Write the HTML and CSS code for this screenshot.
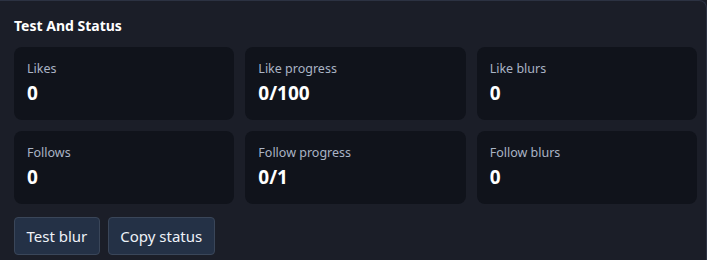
FILE: index.html
```html
<!DOCTYPE html>
<html>
<head>
<meta charset="utf-8">
<link rel="stylesheet" href="styles.css">
</head>
<body>
<section class="panel">
  <h2 class="title">Test And Status</h2>
  <div class="grid">
    <div class="card"><div class="label">Likes</div><div class="value">0</div></div>
    <div class="card"><div class="label">Like progress</div><div class="value">0/100</div></div>
    <div class="card"><div class="label">Like blurs</div><div class="value">0</div></div>
    <div class="card"><div class="label">Follows</div><div class="value">0</div></div>
    <div class="card"><div class="label">Follow progress</div><div class="value">0/1</div></div>
    <div class="card"><div class="label">Follow blurs</div><div class="value">0</div></div>
  </div>
  <div class="actions">
    <button class="btn">Test blur</button>
    <button class="btn">Copy status</button>
  </div>
</section>
</body>
</html>
```
FILE: styles.css
```css
html, body {
  margin: 0;
  padding: 0;
  background: #1b1e28;
}
body {
  font-family: "Noto Sans", "Open Sans", sans-serif;
  width: 707px;
  height: 260px;
  overflow: hidden;
}
.panel {
  box-sizing: border-box;
  width: 707px;
  height: 270px;
  background: #1b1e28;
  border-top: 1px solid #2c3242;
  border-right: 1px solid #2c3242;
  border-top-right-radius: 8px;
  padding: 15px 9px 0 14px;
}
.title {
  margin: 0;
  font-size: 14px;
  font-weight: 700;
  color: #ffffff;
  line-height: 20px;
}
.grid {
  margin-top: 11px;
  display: grid;
  grid-template-columns: repeat(3, 1fr);
  gap: 11px;
}
.card {
  background: #10131b;
  border-radius: 8px;
  height: 73px;
  box-sizing: border-box;
  padding: 13px 13px;
}
.label {
  font-size: 12.5px;
  color: #aab4c5;
  line-height: 18px;
}
.value {
  margin-top: 3px;
  font-size: 19px;
  font-weight: 700;
  color: #ffffff;
  line-height: 24px;
}
.actions {
  margin-top: 13px;
  display: flex;
  gap: 8px;
}
.btn {
  font-family: inherit;
  font-size: 15px;
  color: #eef2f8;
  background: #243146;
  border: 1px solid #3a4659;
  border-radius: 4px;
  height: 38px;
  padding: 0 11.5px;
  line-height: 36px;
}
```
